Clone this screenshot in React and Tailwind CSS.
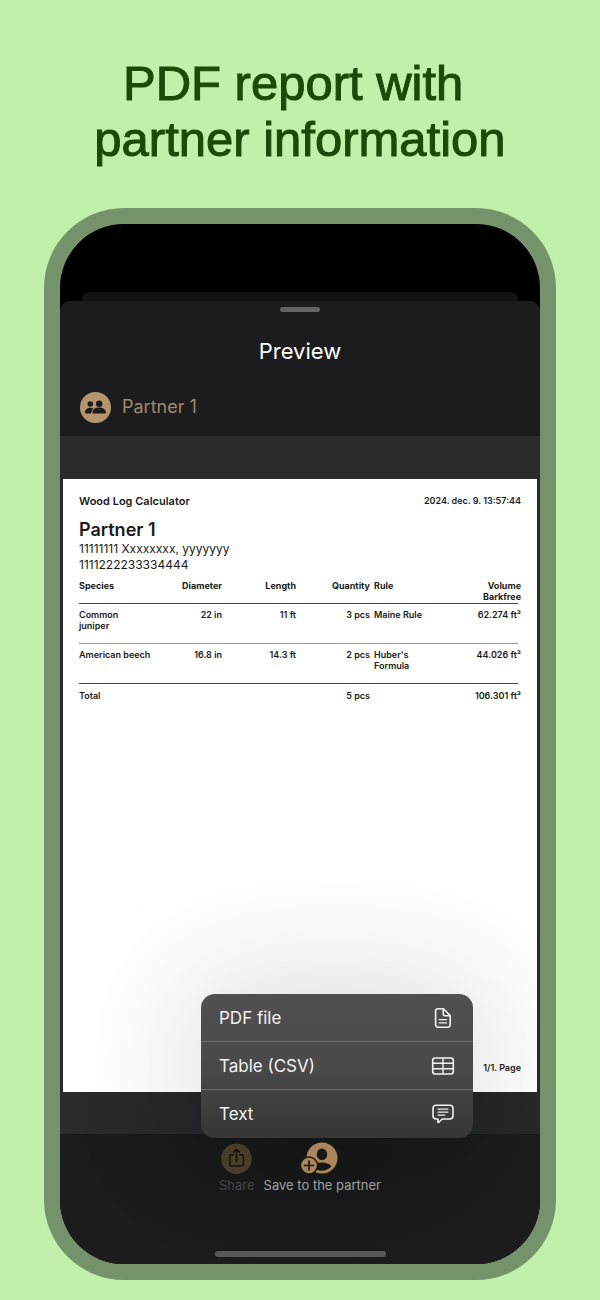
const logs = [
  { species: ['Common', 'juniper'], diameter: '22 in', length: '11 ft', quantity: '3 pcs', rule: ['Maine Rule'], volume: '62.274 ft³' },
  { species: ['American beech'], diameter: '16.8 in', length: '14.3 ft', quantity: '2 pcs', rule: ["Huber's", 'Formula'], volume: '44.026 ft³' },
];

const exportTypes = [
  { label: 'PDF file', Icon: DocIcon },
  { label: 'Table (CSV)', Icon: TableIcon },
  { label: 'Text', Icon: BubbleIcon },
];

function DocIcon() {
  return (
    <svg viewBox="0 0 24 24" className="w-6 h-6" fill="none" stroke="currentColor" strokeWidth="1.6" strokeLinejoin="round" strokeLinecap="round" aria-hidden="true">
      <path d="M7 2.7h5.4l6.800 6.900v9.200a2.400 2.400 0 0 1-2.400 2.400H7a2.400 2.400 0 0 1-2.400-2.400V5.100A2.400 2.400 0 0 1 7 2.700Z" />
      <path d="M12.200 2.900v4.900a2 2 0 0 0 2 2h4.800" />
      <path d="M8.300 13.600h7.200M8.300 16.800h7.200" strokeWidth="1.300" />
    </svg>
  );
}

function TableIcon() {
  return (
    <svg viewBox="0 0 24 24" className="w-6 h-6" fill="none" stroke="currentColor" strokeWidth="1.6" aria-hidden="true">
      <rect x="1.700" y="4" width="20.600" height="16" rx="2.400" />
      <path d="M1.700 9.300h20.600M1.700 14.700h20.600M12 4v16" strokeWidth="1.400" />
    </svg>
  );
}

function BubbleIcon() {
  return (
    <svg viewBox="0 0 24 24" className="w-6 h-6" fill="none" stroke="currentColor" strokeWidth="1.6" strokeLinejoin="round" strokeLinecap="round" aria-hidden="true">
      <path d="M5.200 3.200h13.600a3.200 3.200 0 0 1 3.200 3.200v7.400a3.200 3.200 0 0 1-3.200 3.200h-7.600l-3.400 3.300c-.5.4-.9.300-.9-.3v-3H5.200A3.200 3.200 0 0 1 2 13.800V6.400a3.200 3.200 0 0 1 3.200-3.200Z" />
      <path d="M7 7.100h10M7 10.100h10M7 13.100h6.800" strokeWidth="1.300" />
    </svg>
  );
}

function PeopleIcon() {
  return (
    <svg viewBox="0 0 31 31" className="w-[31px] h-[31px]" aria-hidden="true">
      <circle cx="15.500" cy="15.500" r="15.500" fill="#b5956b" />
      <g fill="#1c1c1e">
        <circle cx="10.300" cy="12" r="2.800" />
        <path d="M5 20.600c0-3 2.300-4.800 5.300-4.800 1.200 0 2.300.3 3.200.9-1.400 1.100-2.200 2.500-2.300 4.900H6.200c-.8 0-1.200-.4-1.200-1Z" />
        <circle cx="19.200" cy="11.800" r="3.200" />
        <path d="M12.500 20.400c0-3.100 2.900-5 6.700-5s6.600 1.900 6.600 5c0 .8-.4 1.200-1.200 1.200H13.700c-.8 0-1.200-.4-1.200-1.200Z" />
      </g>
    </svg>
  );
}

function ShareIcon() {
  return (
    <svg viewBox="0 0 31 32" className="w-[31px] h-8" aria-hidden="true">
      <circle cx="15.500" cy="16.700" r="15.200" fill="#4d402c" />
      <g fill="none" stroke="#17150f" strokeWidth="1.500" strokeLinecap="round" strokeLinejoin="round">
        <path d="M12.300 12.800h-2.100a1.500 1.500 0 0 0-1.500 1.500v8.200a1.500 1.500 0 0 0 1.500 1.500h10.600a1.500 1.500 0 0 0 1.500-1.500v-8.200a1.500 1.500 0 0 0-1.500-1.500h-2.100" />
        <path d="M15.500 19.200V7.500M12.600 10.100l2.900-2.900 2.900 2.900" />
      </g>
    </svg>
  );
}

function SavePartnerIcon() {
  return (
    <svg viewBox="3 0 46 32" className="w-[46px] h-8" aria-hidden="true">
      <circle cx="26" cy="16" r="15.500" fill="#a9875a" />
      <ellipse cx="26" cy="12.400" rx="5.200" ry="5.900" fill="#161817" />
      <path d="M15.500 24c2-2.300 6-3.400 10.500-3.400 4.300 0 7.800 1.300 9.400 3.900-2.500 2.700-5.800 4.200-9.400 4.200-4 0-8-1.400-10.500-4.700Z" fill="#161817" />
      <circle cx="13" cy="23.500" r="9.300" fill="#161817" />
      <circle cx="13" cy="23.500" r="7.800" fill="#a9875a" />
      <path d="M13 19v9M8.500 23.500h9" stroke="#161817" strokeWidth="1.700" strokeLinecap="round" />
    </svg>
  );
}

function Lines({ items }) {
  return items.map((item) => (
    <span key={item} className="block">
      {item}
    </span>
  ));
}

function Report() {
  return (
    <article className="mx-[3px] aspect-[17/22] bg-white text-[#1a1a1a] px-4 pt-4 pb-[18px] flex flex-col">
      <div className="flex justify-between font-semibold leading-3">
        <p className="text-[11px]">Wood Log Calculator</p>
        <p className="text-[9px]">2024. dec. 9. 13:57:44</p>
      </div>
      <h2 className="mt-3 text-lg leading-[22px] font-semibold">Partner 1</h2>
      <p className="text-xs leading-4">
        11111111 Xxxxxxxx, yyyyyyy
        <br />
        1111222233334444
      </p>

      <div className="mt-[7px] mr-[3px]">
        <table className="w-full table-fixed text-[9px] leading-[11px] font-semibold text-right whitespace-nowrap">
          <colgroup>
            <col className="w-[72px]" />
            <col className="w-[75px]" />
            <col className="w-[74px]" />
            <col className="w-[74px]" />
            <col className="w-[74px]" />
            <col />
          </colgroup>
          <thead>
            <tr className="h-[23px] align-top border-b border-[#444]">
              <th className="text-left">Species</th>
              <th className="pr-1">Diameter</th>
              <th className="pr-1">Length</th>
              <th className="pr-1">Quantity</th>
              <th className="text-left">Rule</th>
              <th>
                <div className="-mr-[3px]">
                  Volume
                  <br />
                  Barkfree
                </div>
              </th>
            </tr>
          </thead>
          <tbody>
            {logs.map((log, i) => (
              <tr
                key={log.volume}
                className={`h-10 align-top border-b ${i === logs.length - 1 ? 'border-[#444]' : 'border-[#999]'}`}
              >
                <td className="pt-[5px] text-left">
                  <Lines items={log.species} />
                </td>
                <td className="pt-[5px] pr-1">{log.diameter}</td>
                <td className="pt-[5px] pr-1">{log.length}</td>
                <td className="pt-[5px] pr-1">{log.quantity}</td>
                <td className="pt-[5px] text-left">
                  <Lines items={log.rule} />
                </td>
                <td className="pt-[5px]">
                  <div className="-mr-[3px]">{log.volume}</div>
                </td>
              </tr>
            ))}
          </tbody>
          <tfoot>
            <tr className="align-top">
              <td className="pt-1.5 text-left">Total</td>
              <td />
              <td />
              <td className="pt-1.5 pr-1">5 pcs</td>
              <td />
              <td className="pt-1.5">
                <div className="-mr-[3px]">106.301 ft³</div>
              </td>
            </tr>
          </tfoot>
        </table>
      </div>

      <p className="mt-auto text-right text-[9px] leading-3 font-semibold">1/1. Page</p>
    </article>
  );
}

function ExportMenu() {
  return (
    <div
      role="menu"
      className="absolute z-10 bottom-full -left-[18px] mb-1 w-[272px] rounded-[14px] overflow-hidden bg-linear-to-b from-[#505050] via-[#4a4a4a] to-[#363636] text-[#f2f2f2] divide-y divide-[#6a6a6a] shadow-[0_0_130px_10px_rgba(0,0,0,0.15)]"
    >
      {exportTypes.map(({ label, Icon }) => (
        <button key={label} type="button" role="menuitem" className="w-full h-12 px-[18px] flex items-center justify-between text-[17px]">
          {label}
          <Icon />
        </button>
      ))}
    </div>
  );
}

export default function App() {
  return (
    <main className="min-h-screen bg-[#c0f0a9] px-11 pt-[55px] pb-5 font-['Inter','Liberation_Sans',sans-serif]">
      <h1 className="text-center whitespace-pre font-['Liberation_Sans',sans-serif] text-[49px] leading-14 text-[#1b4a08] [-webkit-text-stroke:1px_#1b4a08]">
        {'PDF report with \npartner information'}
      </h1>

      <div className="mt-[41px] rounded-[80px] bg-[#75936a] p-4">
        <div className="rounded-[64px] overflow-hidden bg-black pt-[68px] flex flex-col">
          {/* edge of the sheet underneath */}
          <div className="mx-[22px] h-[9px] rounded-t-lg bg-[#131314]" />

          <div className="rounded-t-[10px] bg-[#1c1c1e]">
            <header className="pt-1.5 h-[135px]">
              <div className="mx-auto w-10 h-[5px] rounded-full bg-[#636366]" />
              <h2 className="mt-[23px] text-center text-[22px] leading-8 text-white">Preview</h2>
              <div className="mt-6 pl-5 flex items-center gap-[11px] text-lg leading-8 text-[#a08a68]">
                <PeopleIcon />
                Partner 1
              </div>
            </header>

            <section className="bg-[#2b2b2d] bg-[radial-gradient(circle_at_60%_100%,#1e2120,#2b2b2d_280px)] pt-[43px] pb-[42px]">
              <Report />
            </section>

            <footer className="pt-2 bg-[radial-gradient(ellipse_at_top,#151817,#1c1c1e_75%)]">
              <div className="flex justify-center gap-[9px] text-[13px] leading-[22px] text-[#a0a0a0]">
                <div className="relative">
                  <button type="button" aria-haspopup="menu" aria-expanded="true" className="flex flex-col items-center text-[#47484a]">
                    <ShareIcon />
                    Share
                  </button>
                  <ExportMenu />
                </div>
                <button type="button" className="relative z-20 flex flex-col items-center">
                  <SavePartnerIcon />
                  Save to the partner
                </button>
              </div>
              <div className="pt-[55px] pb-[7px]">
                <div className="mx-auto w-[171px] h-1.5 rounded-full bg-[#5a5a5a]" />
              </div>
            </footer>
          </div>
        </div>
      </div>
    </main>
  );
}
